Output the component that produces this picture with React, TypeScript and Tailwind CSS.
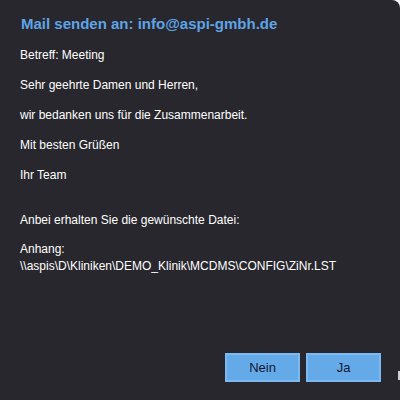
export default function App() {
  return (
    <div
      className="w-[400px] h-[400px] bg-[#28272d] rounded-tr-[8px] flex flex-col text-white overflow-hidden relative"
      style={{ fontFamily: '"Liberation Sans", Arial, sans-serif' }}
    >
      <div className="pl-[21px] pt-[15px] flex flex-col">
        <div className="text-[15px] font-bold text-[#5ea4e6] leading-[18px]">
          Mail senden an: info@aspi-gmbh.de
        </div>
        <div className="mt-[15px] -ml-[1px] text-[12px] leading-[14px] flex flex-col">
          <div>Betreff: Meeting</div>
          <div className="mt-[16px]">Sehr geehrte Damen und Herren,</div>
          <div className="mt-[16px]">wir bedanken uns für die Zusammenarbeit.</div>
          <div className="mt-[16px]">Mit besten Grüßen</div>
          <div className="mt-[16px]">Ihr Team</div>
          <div className="mt-[31px]">Anbei erhalten Sie die gewünschte Datei:</div>
          <div className="mt-[14px] leading-[17px]">
            Anhang:
            <br />
            \\aspis\D\Kliniken\DEMO_Klinik\MCDMS\CONFIG\ZiNr.LST
          </div>
        </div>
      </div>
      <div className="mt-auto mb-[18px] mr-[19px] flex justify-end gap-[6px]">
        <button className="w-[75px] h-[29px] bg-[#64aae8] border-[2px] border-[#7cb9f0] text-[#151530] text-[13px]">
          Nein
        </button>
        <button className="w-[75px] h-[29px] bg-[#64aae8] border-[2px] border-[#7cb9f0] text-[#151530] text-[13px]">
          Ja
        </button>
      </div>
      <div className="absolute right-0 top-[371px] w-[2px] h-[9px] bg-[#d0d0d0]" />
    </div>
  );
}
